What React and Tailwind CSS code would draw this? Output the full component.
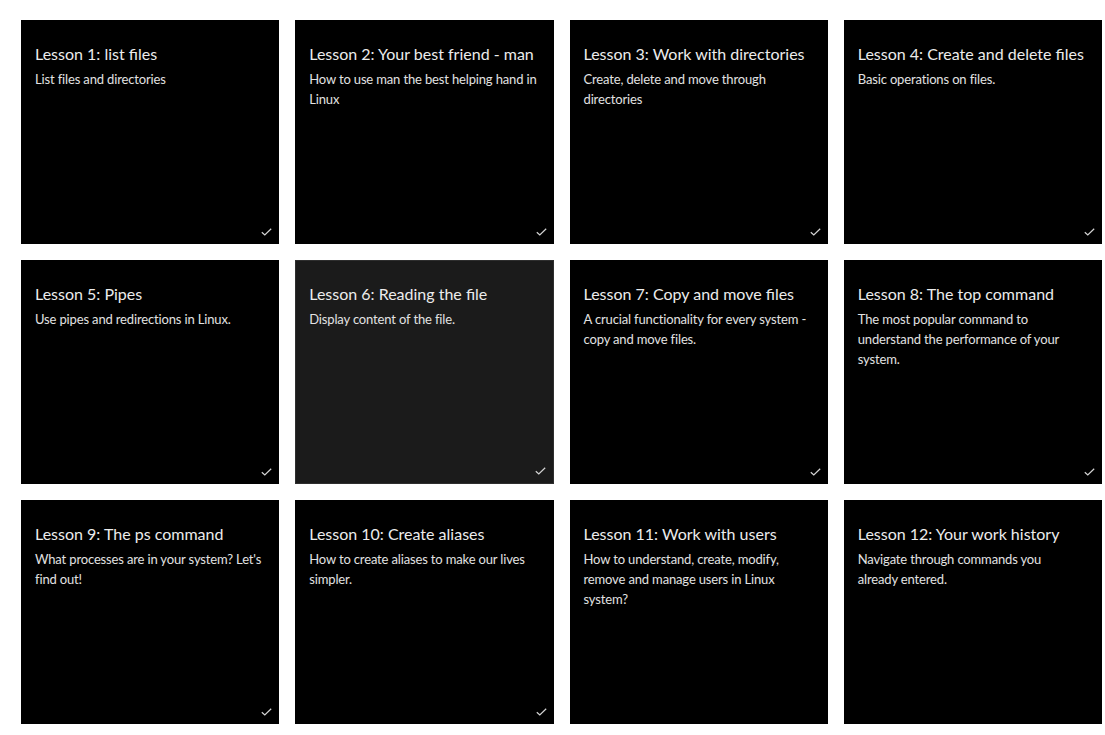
import React from 'react';

const lessons = [
  { title: 'Lesson 1: list files', desc: 'List files and directories', done: true },
  { title: 'Lesson 2: Your best friend - man', desc: 'How to use man the best helping hand in Linux', done: true },
  { title: 'Lesson 3: Work with directories', desc: 'Create, delete and move through directories', done: true },
  { title: 'Lesson 4: Create and delete files', desc: 'Basic operations on files.', done: true },
  { title: 'Lesson 5: Pipes', desc: 'Use pipes and redirections in Linux.', done: true },
  { title: 'Lesson 6: Reading the file', desc: 'Display content of the file.', done: true, active: true },
  { title: 'Lesson 7: Copy and move files', desc: 'A crucial functionality for every system - copy and move files.', done: true },
  { title: 'Lesson 8: The top command', desc: 'The most popular command to understand the performance of your system.', done: true },
  { title: 'Lesson 9: The ps command', desc: "What processes are in your system? Let's find out!", done: true },
  { title: 'Lesson 10: Create aliases', desc: 'How to create aliases to make our lives simpler.', done: true },
  { title: 'Lesson 11: Work with users', desc: 'How to understand, create, modify, remove and manage users in Linux system?', done: false },
  { title: 'Lesson 12: Your work history', desc: 'Navigate through commands you\nalready entered.', done: false },
];

function Check() {
  return (
    <svg width="11" height="8" viewBox="0 0 11 8" fill="none" className="absolute right-[7px] bottom-[8px]">
      <path d="M0.8 4.2 L3.8 7 L10.2 0.8" stroke="#d4d4d4" strokeWidth="1.2" />
    </svg>
  );
}

function LessonCard({ lesson }) {
  const skin = lesson.active
    ? 'bg-[#1b1b1b] border border-[#2e2e2e] px-[13px] pt-[21px]'
    : 'bg-black px-[14px] pt-[22px]';
  return (
    <div className={'relative h-[224px] ' + skin}>
      <h3 className="text-[16px] leading-[24px] text-[#ececec] whitespace-nowrap overflow-hidden">{lesson.title}</h3>
      <p className="mt-[3px] text-[13px] leading-[20px] tracking-[-0.15px] text-[#e2e2e2] whitespace-pre-line">
        {lesson.desc}
      </p>
      {lesson.done && <Check />}
    </div>
  );
}

export default function App() {
  return (
    <div className="min-h-screen bg-white pt-5" style={{ fontFamily: 'Lato, "Open Sans", sans-serif' }}>
      <div className="ml-[21px] w-[1081px] grid grid-cols-4 gap-4">
        {lessons.map((l) => (
          <LessonCard key={l.title} lesson={l} />
        ))}
      </div>
    </div>
  );
}
